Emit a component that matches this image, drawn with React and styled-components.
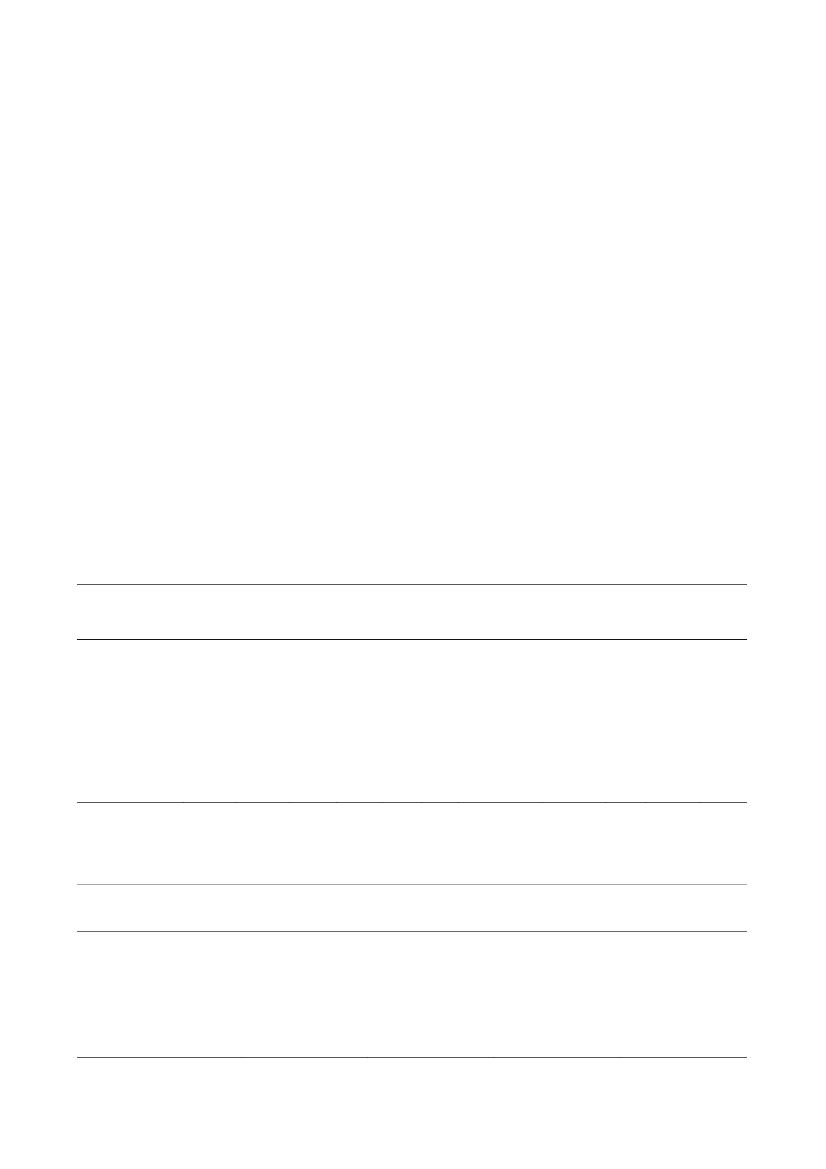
import React from "react";
import styled, { createGlobalStyle } from "styled-components";

const Global = createGlobalStyle`
  html, body { margin: 0; padding: 0; background: #ffffff; }
  body { font-family: "Liberation Serif", "Times New Roman", serif; }
`;

const Page = styled.div`
  width: 826px;
  height: 1169px;
  box-sizing: border-box;
  padding: 584px 79px 0 77px;
  background: #ffffff;
  display: flex;
  flex-direction: column;
`;

const Table = styled.section`
  display: flex;
  flex-direction: column;
  border-top: 1px solid ${(p) => p.$topColor || "#555"};
  margin-top: ${(p) => p.$gap || 0}px;
`;

const Row = styled.div`
  display: grid;
  grid-template-columns: ${(p) => p.$cols};
  height: ${(p) => p.$h}px;
  border-bottom: ${(p) => p.$rule || "none"};
`;

const Cell = styled.div`
  position: relative;
  &:not(:first-child)::after {
    content: "";
    position: absolute;
    left: -1px;
    bottom: -1px;
    width: 1px;
    height: 1px;
    background: ${(p) => p.$tick || "rgba(0,0,0,0.35)"};
  }
`;

const cells = (n) => Array.from({ length: n }, (_, i) => <Cell key={i} />);

const bodyCols = [107, 52, 54, 47, 46, 39, 37, 84, 63, 40, 54, 47]
  .map((w) => `${w}px`)
  .join(" ");

export default function App() {
  return (
    <>
      <Global />
      <Page>
        <Table>
          <Row $cols="382px 1fr" $h={54} $rule="1.5px solid #111">
            {cells(2)}
          </Row>
          <Row $cols={bodyCols} $h={162} $rule="1px solid #555">
            {cells(12)}
          </Row>
        </Table>
        <Table $gap={81} $topColor="#a8a8a8">
          <Row $cols="1fr" $h={46} $rule="1px solid #666">
            {cells(1)}
          </Row>
          <Row $cols="165px 126px 126px 127px 126px" $h={125} $rule="1px solid #555">
            {cells(5)}
          </Row>
        </Table>
      </Page>
    </>
  );
}
